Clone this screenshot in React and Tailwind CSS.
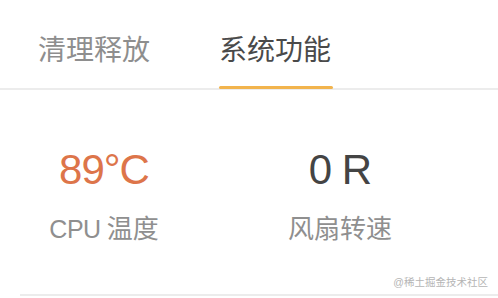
import React from 'react'

const font = { fontFamily: '"Liberation Sans", "Noto Sans CJK SC", sans-serif' }

const tabs = ['清理释放', '系统功能']

const stats = [
  { value: '89°C', label: ['CPU', '温度'], hot: true },
  { value: '0 R', label: [null, '风扇转速'], hot: false },
]

const App = () => {
  const active = 1
  return (
    <div className="relative w-[498px] h-[298px] bg-white overflow-hidden" style={font}>
      {/* tabs */}
      <div className="h-[90px] border-b-2 border-[#ececec] flex pl-[38px] gap-[69px]">
        {tabs.map((t, i) => (
          <div key={t} className="relative h-full pt-[37px]">
            <span className={`block text-[28px] leading-[28px] ${i === active ? 'text-[#4a4a4a]' : 'text-[#8e8e8e]'}`}>
              {t}
            </span>
            {i === active && (
              <div className="absolute left-0 right-[-2px] bottom-[-1px] h-[3px] bg-[#f2b44d] rounded-sm" />
            )}
          </div>
        ))}
      </div>

      {/* stats */}
      <div className="flex gap-[28px] pt-[59px] h-[204px]">
        {stats.map((s) => (
          <div key={s.label[1]} className="w-[208px] flex flex-col items-center">
            <span className={`text-[42px] leading-[42px] tracking-[-1px] ${s.hot ? 'text-[#dd754a]' : 'text-[#444444]'}`}>
              {s.value}
            </span>
            <div className="mt-[25px] flex items-baseline gap-[6px] text-[26px] leading-[26px] text-[#8f8f8f]">
              {s.label[0] && <span className="text-[25px] tracking-[-0.5px]">{s.label[0]}</span>}
              <span>{s.label[1]}</span>
            </div>
          </div>
        ))}
      </div>

      <div className="ml-[20px] border-t-2 border-[#ececec]" />

      <span className="absolute right-[10px] top-[276px] text-[10.5px] leading-[13px] text-[#b5b5b5]">
        @稀土掘金技术社区
      </span>
    </div>
  )
}

export default App
